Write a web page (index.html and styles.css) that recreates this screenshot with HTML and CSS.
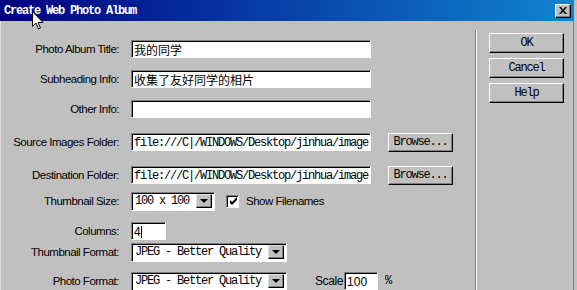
FILE: index.html
```html
<!DOCTYPE html>
<html lang="zh">
<head>
    <meta charset="UTF-8">
    <title>Create Web Photo Album</title>
    <link rel="stylesheet" href="styles.css">
</head>
<body>
<div class="window">
    <div class="titlebar">
        <span class="title">Create Web Photo Album</span>
        <span class="close-btn">
            <svg width="8" height="7" viewBox="0 0 8 7"><path d="M0 0h2l2 2.5L6 0h2L5 3.5 8 7H6L4 4.5 2 7H0l3-3.5z" fill="#000"/></svg>
        </span>
    </div>
    <div class="body">
        <div class="form">
            <div class="row first">
                <label class="label">Photo Album Title:</label>
                <div class="field wide cjk">我的同学</div>
            </div>
            <div class="row">
                <label class="label">Subheading Info:</label>
                <div class="field wide cjk">收集了友好同学的相片</div>
            </div>
            <div class="row">
                <label class="label">Other Info:</label>
                <div class="field wide"></div>
            </div>
            <div class="row gap-lg">
                <label class="label">Source Images Folder:</label>
                <div class="field wide mono">file:///C|/WINDOWS/Desktop/jinhua/image</div>
                <button class="btn browse">Browse...</button>
            </div>
            <div class="row gap-lg">
                <label class="label">Destination Folder:</label>
                <div class="field wide mono">file:///C|/WINDOWS/Desktop/jinhua/image</div>
                <button class="btn browse">Browse...</button>
            </div>
            <div class="row gap-sm">
                <label class="label">Thumbnail Size:</label>
                <div class="select size">
                    <span class="select-value mono">100 x 100</span>
                    <span class="select-arrow"></span>
                </div>
                <span class="checkbox">
                    <svg width="9" height="9" viewBox="0 0 9 9"><path d="M1 3l2 2 5-5v3L3 8 1 6z" fill="#000"/></svg>
                </span>
                <span class="check-label">Show Filenames</span>
            </div>
            <div class="row">
                <label class="label">Columns:</label>
                <div class="field cols"><span>4</span><span class="caret"></span></div>
            </div>
            <div class="row gap-xs">
                <label class="label">Thumbnail Format:</label>
                <div class="select format">
                    <span class="select-value mono">JPEG - Better Quality</span>
                    <span class="select-arrow"></span>
                </div>
            </div>
            <div class="row gap-md">
                <label class="label">Photo Format:</label>
                <div class="select format">
                    <span class="select-value mono">JPEG - Better Quality</span>
                    <span class="select-arrow"></span>
                </div>
                <span class="scale-label">Scale</span>
                <div class="field scale">100</div>
                <span class="percent mono">%</span>
            </div>
        </div>
        <div class="divider"></div>
        <div class="actions">
            <button class="btn action">OK</button>
            <button class="btn action">Cancel</button>
            <button class="btn action">Help</button>
        </div>
    </div>
    <svg class="cursor" width="12" height="20" viewBox="0 0 12 20">
        <path d="M0.5 0.5v15l3.5-3.5 2.5 6 2-1-2.5-5.5h5z" fill="#fff" stroke="#000" stroke-width="1"/>
    </svg>
</div>
</body>
</html>
```

FILE: styles.css
```css
body {
    margin: 0;
    padding: 0;
    background-color: #c0c0c0;
    font-family: 'Liberation Sans', Arial, sans-serif;
}
.window {
    position: relative;
    width: 574px;
    height: 290px;
    background-color: #c0c0c0;
    overflow: hidden;
}
.titlebar {
    height: 21px;
    background: linear-gradient(to right, #000080, #1084d0);
    display: flex;
    align-items: center;
    justify-content: space-between;
    padding: 0 3px 0 4px;
}
.title {
    color: #ffffff;
    font-family: 'Liberation Mono', monospace;
    font-weight: bold;
    font-size: 12px;
    letter-spacing: -1.2px;
}
.close-btn {
    width: 14px;
    height: 12px;
    background-color: #c0c0c0;
    border: 1px solid;
    border-color: #ffffff #000000 #000000 #ffffff;
    box-shadow: inset -1px -1px #808080;
    display: flex;
    align-items: center;
    justify-content: center;
}
.body {
    display: flex;
    height: 269px;
    border-right: 1px solid #808080;
    border-left: 1px solid #dfdfdf;
}
.form {
    width: 474px;
    display: flex;
    flex-direction: column;
}
.row {
    display: flex;
    align-items: center;
    height: 18px;
    margin-top: 12px;
}
.row.first {
    margin-top: 19px;
}
.row.gap-lg {
    margin-top: 15px;
}
.row.gap-sm {
    margin-top: 8px;
}
.row.gap-xs {
    margin-top: 3px;
}
.row.gap-md {
    margin-top: 11px;
}
.label {
    width: 118px;
    text-align: right;
    font-size: 11.5px;
    letter-spacing: -0.5px;
    margin-right: 12px;
    color: #000;
}
.field {
    box-sizing: border-box;
    height: 18px;
    background-color: #ffffff;
    border: 1px solid;
    border-color: #808080 #ffffff #ffffff #808080;
    box-shadow: inset 1px 1px #000000;
    padding: 1px 0 0 2px;
    display: flex;
    align-items: center;
    white-space: nowrap;
    overflow: hidden;
}
.field.wide {
    width: 240px;
}
.cjk {
    font-family: 'Noto Sans CJK SC', sans-serif;
    font-size: 12px;
}
.mono {
    font-family: 'Liberation Mono', monospace;
    font-size: 12px;
    letter-spacing: -1.2px;
}
.btn {
    box-sizing: border-box;
    background-color: #c0c0c0;
    border: 1px solid;
    border-color: #ffffff #000000 #000000 #ffffff;
    box-shadow: inset -1px -1px #808080;
    font-family: 'Liberation Mono', monospace;
    font-size: 12px;
    letter-spacing: -1.2px;
    color: #000;
    padding: 0;
}
.browse {
    width: 65px;
    height: 19px;
    margin-left: 17px;
}
.select {
    box-sizing: border-box;
    height: 19px;
    background-color: #ffffff;
    border: 1px solid;
    border-color: #808080 #ffffff #ffffff #808080;
    box-shadow: inset 1px 1px #000000;
    display: flex;
    align-items: center;
    padding: 2px 2px 2px 3px;
}
.select.size {
    width: 84px;
}
.select.format {
    width: 156px;
}
.select-value {
    flex: 1;
    white-space: nowrap;
}
.select-arrow {
    box-sizing: border-box;
    width: 16px;
    height: 14px;
    background-color: #c0c0c0;
    border: 1px solid;
    border-color: #dfdfdf #000000 #000000 #dfdfdf;
    box-shadow: inset -1px -1px #808080;
    display: flex;
    align-items: center;
    justify-content: center;
}
.select-arrow::after {
    content: '';
    border-left: 4px solid transparent;
    border-right: 4px solid transparent;
    border-top: 4px solid #000;
}
.checkbox {
    box-sizing: border-box;
    width: 13px;
    height: 13px;
    margin-left: 11px;
    background-color: #ffffff;
    border: 1px solid;
    border-color: #808080 #ffffff #ffffff #808080;
    box-shadow: inset 1px 1px #000000;
    display: flex;
    align-items: center;
    justify-content: center;
    padding: 1px 0 0 1px;
}
.check-label {
    margin-left: 7px;
    font-size: 11.5px;
    letter-spacing: -0.5px;
}
.field.cols {
    width: 35px;
    font-size: 12px;
}
.caret {
    width: 1px;
    height: 12px;
    background-color: #000;
}
.scale-label {
    margin-left: 28px;
    font-size: 12px;
    letter-spacing: -0.4px;
}
.field.scale {
    width: 34px;
    margin-left: 1px;
    font-size: 12px;
}
.percent {
    margin-left: 7px;
}
.divider {
    width: 0;
    margin-top: 9px;
    border-left: 1px solid #808080;
    border-right: 1px solid #ffffff;
}
.actions {
    display: flex;
    flex-direction: column;
    gap: 5px;
    padding: 12px 0 0 12px;
}
.action {
    width: 75px;
    height: 20px;
}
.cursor {
    position: absolute;
    left: 32px;
    top: 11px;
}
```
